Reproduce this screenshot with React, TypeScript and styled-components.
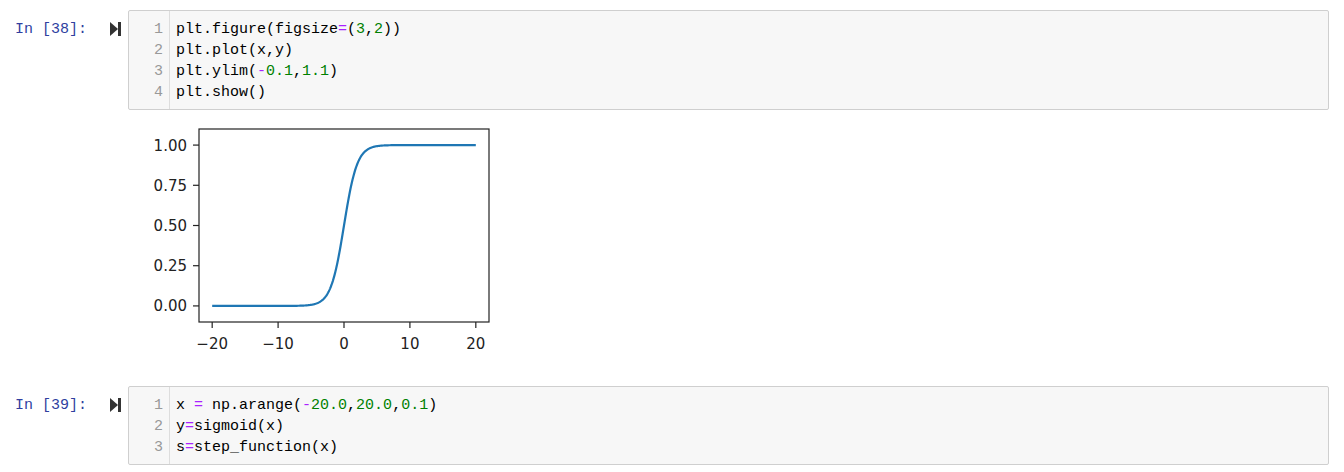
import React from "react";
import styled, { createGlobalStyle } from "styled-components";

const GlobalStyle = createGlobalStyle`
    html, body {
        margin: 0;
        padding: 0;
        background: #fff;
    }
`;

type Token = { t: string; k?: "op" | "num" };
type Cell = { count: number; lines: Token[][] };

const cells: Cell[] = [
    {
        count: 38,
        lines: [
            [{ t: "plt.figure(figsize" }, { t: "=", k: "op" }, { t: "(" }, { t: "3", k: "num" }, { t: "," }, { t: "2", k: "num" }, { t: "))" }],
            [{ t: "plt.plot(x,y)" }],
            [{ t: "plt.ylim(" }, { t: "-", k: "op" }, { t: "0.1", k: "num" }, { t: "," }, { t: "1.1", k: "num" }, { t: ")" }],
            [{ t: "plt.show()" }],
        ],
    },
    {
        count: 39,
        lines: [
            [
                { t: "x " },
                { t: "=", k: "op" },
                { t: " np.arange(" },
                { t: "-", k: "op" },
                { t: "20.0", k: "num" },
                { t: "," },
                { t: "20.0", k: "num" },
                { t: "," },
                { t: "0.1", k: "num" },
                { t: ")" },
            ],
            [{ t: "y" }, { t: "=", k: "op" }, { t: "sigmoid(x)" }],
            [{ t: "s" }, { t: "=", k: "op" }, { t: "step_function(x)" }],
        ],
    },
];

function RunIcon() {
    return (
        <svg width="11" height="14" viewBox="0 0 11 14">
            <polygon points="0,0 8,7 0,14" fill="#333" />
            <rect x="8" y="0" width="3" height="14" fill="#333" />
        </svg>
    );
}

function CodeCell({ cell }: { cell: Cell }) {
    return (
        <Row>
            <Prompt>
                <span>In [{cell.count}]:</span>
                <IconSlot>
                    <RunIcon />
                </IconSlot>
            </Prompt>
            <Editor>
                <Gutter>
                    {cell.lines.map((_, i) => (
                        <LineNo key={i}>{i + 1}</LineNo>
                    ))}
                </Gutter>
                <Code>
                    {cell.lines.map((line, i) => (
                        <CodeLine key={i}>
                            {line.map((tok, j) => (
                                <Tok key={j} $kind={tok.k}>
                                    {tok.t}
                                </Tok>
                            ))}
                        </CodeLine>
                    ))}
                </Code>
            </Editor>
        </Row>
    );
}

// figure coords (svg origin at page 128,115)
const AX_L = 71;
const AX_R = 361;
const AX_T = 14;
const AX_B = 207;
const px = (x: number) => AX_L + ((x + 22) / 44) * (AX_R - AX_L);
const py = (y: number) => AX_T + ((1.1 - y) / 1.2) * (AX_B - AX_T);

function SigmoidPlot() {
    const pts: string[] = [];
    for (let i = 0; i <= 400; i++) {
        const x = -20 + i * 0.1;
        const y = 1 / (1 + Math.exp(-x));
        pts.push(`${px(x).toFixed(2)},${py(y).toFixed(2)}`);
    }
    const yt = [0, 0.25, 0.5, 0.75, 1];
    const xt = [-20, -10, 0, 10, 20];
    return (
        <Figure width="380" height="245" viewBox="0 0 380 245">
            <polyline points={pts.join(" ")} fill="none" stroke="#1f77b4" strokeWidth="2.2" />
            <rect x={AX_L} y={AX_T} width={AX_R - AX_L} height={AX_B - AX_T} fill="none" stroke="#222" strokeWidth="1.2" />
            {yt.map((v) => (
                <g key={v}>
                    <line x1={AX_L - 6} x2={AX_L} y1={py(v)} y2={py(v)} stroke="#222" strokeWidth="1.2" />
                    <TickLabel x={AX_L - 12} y={py(v) + 5.5} textAnchor="end">
                        {v.toFixed(2)}
                    </TickLabel>
                </g>
            ))}
            {xt.map((v) => (
                <g key={v}>
                    <line x1={px(v)} x2={px(v)} y1={AX_B} y2={AX_B + 6} stroke="#222" strokeWidth="1.2" />
                    <TickLabel x={px(v)} y={234} textAnchor="middle">
                        {v < 0 ? `\u2212${-v}` : `${v}`}
                    </TickLabel>
                </g>
            ))}
        </Figure>
    );
}

export default function App() {
    return (
        <>
            <GlobalStyle />
            <Notebook>
                <CodeCell cell={cells[0]} />
                <Output>
                    <OutputPrompt />
                    <SigmoidPlot />
                </Output>
                <CodeCell cell={cells[1]} />
            </Notebook>
        </>
    );
}

const Notebook = styled.div`
    padding: 10px 15px 0 0;
    display: flex;
    flex-direction: column;
`;

const Row = styled.div`
    display: flex;
    align-items: flex-start;
`;

const Prompt = styled.div`
    width: 128px;
    flex: none;
    box-sizing: border-box;
    padding: 9px 7px 0 15px;
    display: flex;
    justify-content: space-between;
    font-family: "Liberation Mono", monospace;
    font-size: 15px;
    line-height: 21px;
    color: #303f9f;
`;

const IconSlot = styled.span`
    display: flex;
    align-items: center;
    height: 21px;
    margin-top: -1px;
`;

const Editor = styled.div`
    flex: 1;
    display: flex;
    background: #f7f7f7;
    border: 1px solid #cfcfcf;
    border-radius: 2px;
    font-family: "Liberation Mono", monospace;
    font-size: 15px;
    line-height: 21px;
`;

const Gutter = styled.div`
    width: 41px;
    box-sizing: border-box;
    padding: 8px 6px 6px 0;
    border-right: 1px solid #ddd;
    text-align: right;
    color: #999;
`;

const LineNo = styled.div``;

const Code = styled.div`
    padding: 8px 0 6px 6px;
    color: #000;
`;

const CodeLine = styled.div`
    white-space: pre;
`;

const Tok = styled.span<{ $kind?: "op" | "num" }>`
    color: ${(p) => (p.$kind === "op" ? "#aa22ff" : p.$kind === "num" ? "#008000" : "inherit")};
`;

const Output = styled.div`
    display: flex;
    margin: 5px 0 26px;
`;

const OutputPrompt = styled.div`
    width: 128px;
    flex: none;
`;

const Figure = styled.svg`
    display: block;
`;

const TickLabel = styled.text`
    font-family: "DejaVu Sans", sans-serif;
    font-size: 15px;
    fill: #222;
`;
